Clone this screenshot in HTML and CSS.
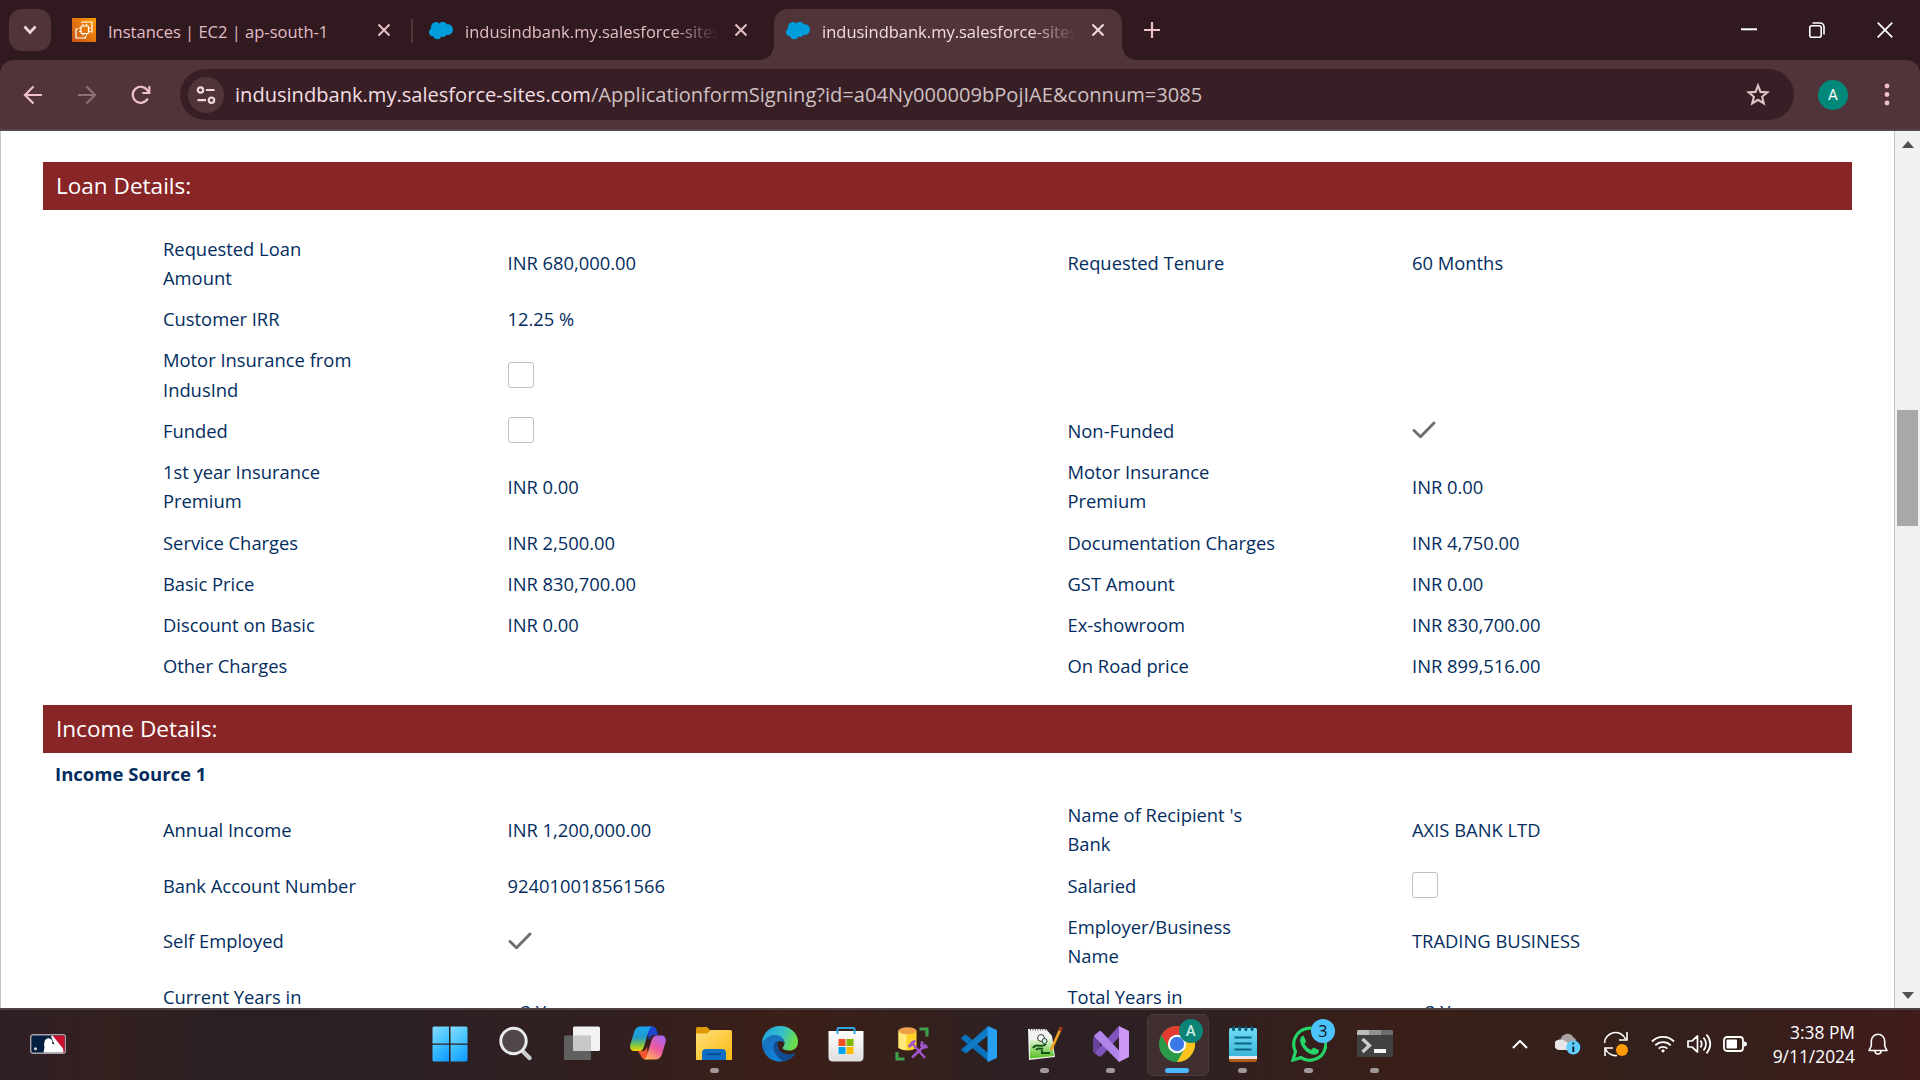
FILE: index.html
```html
<!DOCTYPE html>
<html lang="en">
<head>
<meta charset="utf-8">
<title>Application Form Signing</title>
<link rel="stylesheet" href="styles.css">
</head>
<body>
<svg class="defs" width="0" height="0" aria-hidden="true">
  <defs>
    <symbol id="cloud" viewBox="0 0 24 20"><path fill="#009ddc" d="M10 2.4A5 5 0 0 1 13.600 .8c1.900 0 3.500 1 4.300 2.600A5.200 5.200 0 0 1 24 8.600a5.300 5.300 0 0 1-6.400 5.200 4 4 0 0 1-5.100 1.700 4.600 4.600 0 0 1-8.500-.2A4.200 4.200 0 0 1 0 11.200c0-1.500.9-2.900 2.100-3.600A4.600 4.600 0 0 1 2 5.400 4.800 4.800 0 0 1 10 2.400z" transform="translate(0 1)"/></symbol>
    <symbol id="x" viewBox="0 0 14 14"><path d="M1.500 1.500l11 11m0-11l-11 11" stroke="currentColor" stroke-width="2.100" fill="none"/></symbol>
    <symbol id="check" viewBox="0 0 24 20"><path d="M2 10.500l6.500 6.300L22 3" stroke="#706e6b" stroke-width="2.900" fill="none" stroke-linecap="round" stroke-linejoin="round"/></symbol>
  </defs>
</svg>

<header class="tabstrip">
  <div class="tab-search"><svg width="14" height="10" viewBox="0 0 14 10"><path d="M1.500 1.500L7 7.500l5.500-6" fill="none" stroke="#ecd7dc" stroke-width="2.600"/></svg></div>
  <div class="tab tab-first">
    <svg class="fav" width="24" height="24" viewBox="0 0 24 24"><defs><linearGradient id="aws" x1="0" y1="1" x2="1" y2="0"><stop offset="0" stop-color="#c8511b"/><stop offset="1" stop-color="#f90"/></linearGradient></defs><path fill="url(#aws)" d="M0 0h24v24H0z"/><g fill="none" stroke="#fff" stroke-width="1.200"><rect x="9" y="8" width="7.500" height="7.500" rx="1"/><path d="M11 6v2m3.500-2v2M11 15.500v2m3.500-2v2M7 10h2m-2 3.500h2m7.500-3.500h2m-2 3.500h2M10 5V4h10v10h-1.500M6.500 11H4v9h9.500v-2"/></g></svg>
    <span class="tab-title t1">Instances | EC2 | ap-south-1</span>
    <svg class="tab-x" width="14" height="14"><use href="#x"/></svg>
  </div>
  <i class="tab-sep"></i>
  <div class="tab tab-second">
    <svg class="fav" width="24" height="20"><use href="#cloud"/></svg>
    <span class="tab-title fade">indusindbank.my.salesforce-sites.com</span>
    <svg class="tab-x" width="14" height="14"><use href="#x"/></svg>
  </div>
  <div class="tab tab-active">
    <svg class="fav" width="24" height="20"><use href="#cloud"/></svg>
    <span class="tab-title fade">indusindbank.my.salesforce-sites.com</span>
    <svg class="tab-x" width="14" height="14"><use href="#x"/></svg>
  </div>
  <svg class="plus" width="16" height="16" viewBox="0 0 16 16"><path d="M8 0v16M0 8h16" stroke="#edc0ca" stroke-width="2.200"/></svg>
  <div class="win">
    <svg width="16" height="16" viewBox="0 0 16 16"><path d="M0 7.300h16" stroke="#fff" stroke-width="2"/></svg>
    <svg width="16" height="16" viewBox="0 0 16 16" fill="none" stroke="#fff" stroke-width="1.600"><rect x=".8" y="3.800" width="11.400" height="11.400" rx="2"/><path d="M3.500 1H11a4 4 0 0 1 4 4v7.500"/></svg>
    <svg width="16" height="16" viewBox="0 0 16 16"><path d="M.7.7l14.600 14.600m0-14.600L.7 15.300" stroke="#fff" stroke-width="1.700"/></svg>
  </div>
</header>

<div class="toolbar-back">
<nav class="toolbar">
  <svg class="back" width="20" height="20" viewBox="0 0 20 20"><path d="M19 10H2m8.500-8.500L2 10l8.500 8.500" fill="none" stroke="#edc0ca" stroke-width="2.200"/></svg>
  <svg class="fwd" width="20" height="20" viewBox="0 0 20 20"><path d="M1 10h17M9.500 1.500L18 10l-8.500 8.500" fill="none" stroke="#8d6f75" stroke-width="2.200"/></svg>
  <svg class="reload" width="20" height="20" viewBox="0 0 20 20"><path d="M16.800 13.500A8 8 0 1 1 16.500 5.500L18 7.500M18.300 1v7h-7" fill="none" stroke="#edc0ca" stroke-width="2.200"/></svg>
  <div class="omnibox">
    <span class="site"><svg width="20" height="20" viewBox="0 0 20 20" fill="none" stroke="#ecd7dc" stroke-width="2.200"><circle cx="4.500" cy="5" r="2.700"/><path d="M10 5h8.500M1.500 15.200H10"/><circle cx="15.500" cy="15.200" r="2.700"/></svg></span>
    <span class="url"><b>indusindbank.my.salesforce-sites.com</b>/ApplicationformSigning?id=a04Ny000009bPojIAE&amp;connum=3085</span>
    <svg class="star" width="24" height="24" viewBox="0 0 24 24"><path d="M12 2.500l2.500 6.400 6.900.5-5.300 4.400 1.700 6.700L12 16.800l-5.800 3.700 1.700-6.700-5.300-4.400 6.900-.5z" fill="none" stroke="#dcc4c9" stroke-width="2.100"/></svg>
  </div>
  <span class="avatar">A</span>
  <svg class="dots" width="6" height="24" viewBox="0 0 6 24" fill="#edc0ca"><circle cx="3" cy="3" r="2.400"/><circle cx="3" cy="11.500" r="2.400"/><circle cx="3" cy="20" r="2.400"/></svg>
</nav>
</div>

<div class="viewport">
  <main class="page">
    <h2 class="bar">Loan Details:</h2>
    <div class="grid loan">
      <span>Requested Loan<br>Amount</span><span>INR 680,000.00</span><span>Requested Tenure</span><span>60 Months</span>
      <span>Customer IRR</span><span>12.25 %</span><span></span><span></span>
      <span>Motor Insurance from<br>IndusInd</span><span><i class="box"></i></span><span></span><span></span>
      <span>Funded</span><span><i class="box"></i></span><span>Non-Funded</span><span><svg class="check" width="24" height="20"><use href="#check"/></svg></span>
      <span>1st year Insurance<br>Premium</span><span>INR 0.00</span><span>Motor Insurance<br>Premium</span><span>INR 0.00</span>
      <span>Service Charges</span><span>INR 2,500.00</span><span>Documentation Charges</span><span>INR 4,750.00</span>
      <span>Basic Price</span><span>INR 830,700.00</span><span>GST Amount</span><span>INR 0.00</span>
      <span>Discount on Basic</span><span>INR 0.00</span><span>Ex-showroom</span><span>INR 830,700.00</span>
      <span>Other Charges</span><span></span><span>On Road price</span><span>INR 899,516.00</span>
    </div>
    <h2 class="bar">Income Details:</h2>
    <h3 class="source">Income Source 1</h3>
    <div class="grid">
      <span>Annual Income</span><span>INR 1,200,000.00</span><span>Name of Recipient 's<br>Bank</span><span>AXIS BANK LTD</span>
      <span>Bank Account Number</span><span>924010018561566</span><span>Salaried</span><span><i class="box"></i></span>
      <span>Self Employed</span><span><svg class="check" width="24" height="20"><use href="#check"/></svg></span><span>Employer/Business<br>Name</span><span>TRADING BUSINESS</span>
      <span>Current Years in<br>Business</span><span class="years">3 Years</span><span>Total Years in<br>Business</span><span class="years">3 Years</span>
    </div>
  </main>
  <div class="scroll">
    <svg width="12" height="7" viewBox="0 0 12 7"><path d="M0 7l6-7 6 7z" fill="#505050"/></svg>
    <i class="thumb"></i>
    <svg class="down" width="12" height="7" viewBox="0 0 12 7"><path d="M0 0h12L6 7z" fill="#505050"/></svg>
  </div>
</div>

<footer class="taskbar">
  <svg class="mlb" width="36" height="20" viewBox="0 0 36 20"><rect x=".7" y=".7" width="34.600" height="18.600" rx="2.500" fill="#041e42" stroke="#aaa4a8" stroke-width="1.400"/><path d="M22 1.400h11.500q1.100 0 1.100 1.100v15q0 1.100-1 1.100H31z" fill="#c8102e"/><path d="M13.500 18.600l1-5 -.5-3 1-4.500 3-2 3 1 1.500 2-.5 2.500 2.500 1L21 2.500l1.500-1L33 14.500l.5 4.100z" fill="#fff"/><circle cx="5.500" cy="14.800" r="1.500" fill="#ddd"/></svg>
  <div class="apps">
    <span class="app"><svg viewBox="0 0 36 36"><defs><linearGradient id="w" x1="0" y1="0" x2="1" y2="1"><stop offset="0" stop-color="#83dcff"/><stop offset="1" stop-color="#34bcff"/></linearGradient><linearGradient id="w2" x1="0" y1="0" x2="1" y2="1"><stop offset="0" stop-color="#4cc9ff"/><stop offset="1" stop-color="#0c97ff"/></linearGradient></defs><path fill="url(#w)" d="M2 .5h15v17H.5V2Q.5.500 2 .500z"/><path fill="url(#w)" d="M18.500.5H34q1.500 0 1.500 1.500v15.500h-17z"/><path fill="url(#w2)" d="M.5 18.800H17v16.700H2q-1.500 0-1.500-1.500z"/><path fill="url(#w2)" d="M18.500 18.800h17V34q0 1.500-1.500 1.500H18.500z"/></svg></span>
    <span class="app"><svg viewBox="0 0 36 36"><path d="M24 24.500l7.500 7.500" stroke="#c9cdd2" stroke-width="4.500" stroke-linecap="round"/><circle cx="15.500" cy="15" r="12.700" fill="#51474a" stroke="#e9eaec" stroke-width="3"/></svg></span>
    <span class="app"><svg viewBox="0 0 36 36"><rect x="0" y="9.500" width="27" height="24.500" rx="1.500" fill="#606060"/><rect x="9" y=".5" width="27" height="24.500" rx="1.500" fill="#f2f2f2"/><path d="M9 9.500h18V25H10.500Q9 25 9 23.500z" fill="#c8c8c8"/></svg></span>
    <span class="app"><svg viewBox="0 0 36 36"><defs><linearGradient id="c1" x1="0" y1="0" x2="0" y2="1"><stop offset="0" stop-color="#18a5ee"/><stop offset=".45" stop-color="#2399c8"/><stop offset=".75" stop-color="#7cc448"/><stop offset="1" stop-color="#f5d600"/></linearGradient><linearGradient id="c2" x1=".8" y1="0" x2=".2" y2="1"><stop offset="0" stop-color="#a965ef"/><stop offset=".5" stop-color="#ee5ba0"/><stop offset="1" stop-color="#ffb657"/></linearGradient></defs><path fill="#1b48cf" d="M17 .5h5.500c2.500 0 3.500 1.500 4.200 4L28 9h-4c-3 0-4 2-5 5z"/><path fill="url(#c1)" d="M10.500.5H22c-2 .7-3 3-3.800 6l-4 13.500c-1 3-2 5-5 5H4c-3.500 0-4.500-3-3.500-7L4 6.500C5 3 7 .5 10.500.5z"/><path fill="#f2542d" d="M8 25h4c3 0 4-1.500 5-5l1 10-2 3H15c-2.500 0-3.500-1.500-4.200-3.500z"/><path fill="url(#c2)" d="M27 9.500h4.500c3.500 0 5 3 4 7l-3.500 11.500c-1 3.500-3 5.500-6.500 5.500H13.500c2.500-.8 3.300-3 4-6l4-13c1-3 2.500-5 5.500-5z"/></svg></span>
    <span class="app run"><svg viewBox="0 0 36 36"><defs><linearGradient id="fo" x1="0" y1="0" x2="1" y2="1"><stop offset="0" stop-color="#ffe07a"/><stop offset="1" stop-color="#fbb90f"/></linearGradient></defs><path fill="#dc9b05" d="M0 2.500Q0 1 1.500 1H11l4 4v6H0z"/><path fill="url(#fo)" d="M0 7.500h11l4-3.500h19.500Q36 4 36 5.500V34H0z"/><path fill="#0c6fc4" d="M6 34V27q0-4 4-4h16q4 0 4 4v7z"/><path d="M11 28.200h14" stroke="#063f7d" stroke-width="1.400"/></svg></span>
    <span class="app"><svg viewBox="0 0 36 36"><defs><linearGradient id="e1" x1="0" y1="0" x2="1" y2=".3"><stop offset="0" stop-color="#1a9fe0"/><stop offset=".6" stop-color="#35c1c8"/><stop offset="1" stop-color="#69dc4c"/></linearGradient><linearGradient id="e2" x1="0" y1="0" x2=".7" y2="1"><stop offset="0" stop-color="#1d6cb5"/><stop offset="1" stop-color="#0b86dd"/></linearGradient></defs><path fill="url(#e2)" d="M0 17C0 10 8 6 14 7.500c5 1 8 5 8 9-7-5-11 4-6 9 5 6 13 4 17 2A18 18 0 0 1 0 17z"/><path fill="#104d92" d="M15 14.500c-4 3-5 8-1 14 2 3.500 5.500 6.500 9 6.500 5-1.500 9-4.500 10.300-8C25 31 16 26 16 20z"/><path fill="url(#e1)" d="M0 17C.5 7 8 0 18 0c11 0 18 8 18 15.500C36 22 32 24.500 27.500 24.500c-4.500 0-7-1.500-7-2.500s2-1.500 2-5C22.500 9 9 4 0 17z"/></svg></span>
    <span class="app"><svg viewBox="0 0 36 36"><defs><linearGradient id="st" x1="0" y1="0" x2="0" y2="1"><stop offset="0" stop-color="#fff"/><stop offset="1" stop-color="#dedede"/></linearGradient></defs><path fill="url(#st)" d="M.5 5h35v26q0 4.500-4.500 4.500H5q-4.500 0-4.500-4.500z"/><path d="M9.500 8V3q0-1 1-1h15q1 0 1 1v5" fill="none" stroke="#29a9e0" stroke-width="2"/><path fill="#f25022" d="M10.500 13h7v7h-7z"/><path fill="#7fba00" d="M18.500 13h7v7h-7z"/><path fill="#00a4ef" d="M10.500 21h7v7h-7z"/><path fill="#ffb900" d="M18.500 21h7v7h-7z"/></svg></span>
    <span class="app"><svg viewBox="0 0 36 36"><path fill="#ffd329" d="M4.500 4.500h18V22q-9 5-18 0z"/><path fill="#ffe778" d="M4.500 4.500h8V24q-5 0-8-2z"/><ellipse cx="13.500" cy="4.700" rx="9" ry="3.500" fill="#f0a04b"/><path d="M25.500 3h7.500v7.500M3 26v7h7.500" stroke="#3f9e49" stroke-width="3.200" fill="none"/><path d="M17 16l14 16M18 31.500l14-13" stroke="#a055c8" stroke-width="2.500"/><path d="M13.500 20l6-6 3 1-6.500 7zM27 15l-1 5 3 3 5-1-1-3-2 1-2-2 1-2z" fill="#a055c8"/></svg></span>
    <span class="app"><svg viewBox="0 0 36 36"><path fill="#0873bd" d="M0 12l3.500-3q1-.7 2 0L27 27v8L1 13.500Q0 12.700 0 12z"/><path fill="#0a6ab3" d="M0 24l3.500 3q1 .7 2 0L27 9V1L1 22.500Q0 23.300 0 24z"/><path fill="#1590dc" d="M26.500 0L3 22.500 5.500 27 26.500 10z" opacity=".45"/><path fill="#27a0f2" d="M26.500 0L36 4v28l-9.500 4z"/></svg></span>
    <span class="app run"><svg viewBox="0 0 36 36"><defs><linearGradient id="np" x1="0" y1="0" x2="0" y2="1"><stop offset="0" stop-color="#eefbe4"/><stop offset="1" stop-color="#53bd21"/></linearGradient></defs><path fill="#f3f3f3" d="M1 3h18l6 7 3 21-26 3z"/><path d="M3 3.500h16" stroke="#555" stroke-width="2" stroke-dasharray="1 1.500"/><path fill="url(#np)" d="M3 14l21-2 3 18-24 2.500z"/><path d="M6 22c3-6 9 1 13-4M9 24c2-3 5 0 7-2M15 24v3h8" stroke="#16561a" stroke-width="2" fill="none"/><circle cx="14" cy="12" r="3.400" fill="#fff" stroke="#333"/><circle cx="17.500" cy="15" r="2.500" fill="#cfe" stroke="#333"/><path d="M34 2L24 24" stroke="#f0a020" stroke-width="2.800"/><path d="M34.500 1L33 5" stroke="#a33025" stroke-width="2.800"/></svg></span>
    <span class="app run"><svg viewBox="0 0 36 36"><path fill="#67429b" d="M1 11l6 5v5l-6 6q-1-1-1-2V13q0-1 1-2zM26 0v11L9 30 1.500 27z"/><path fill="#7f55bd" d="M1.500 27L26 0v11L6.500 31z"/><path fill="#b184ea" d="M1 9.500L6.500 5q1-.5 2 .5L26 24.500V36L1.500 11z"/><path fill="#ca97f7" d="M26 0l10 5v26l-10 5z"/></svg></span>
    <span class="app run active"><svg viewBox="0 0 36 36"><circle cx="18" cy="18" r="18" fill="#2b9a48"/><path fill="#e53a30" d="M2.400 9A18 18 0 0 1 33.600 9H18a9 9 0 0 0-7.800 13.500z"/><path fill="#fcc31d" d="M33.600 9A18 18 0 0 1 18 36l7.800-13.500A9 9 0 0 0 25.800 13.500L18 9z"/><circle cx="18" cy="18" r="9.200" fill="#fff"/><circle cx="18" cy="18" r="7.200" fill="#3b78e8"/></svg><b class="badge a">A</b></span>
    <span class="app run"><svg viewBox="0 0 36 36"><defs><linearGradient id="nt" x1="0" y1="0" x2="0" y2="1"><stop offset="0" stop-color="#71dcf5"/><stop offset="1" stop-color="#3db7da"/></linearGradient></defs><path fill="#b75b13" d="M4 30h28v4q0 2-2 2H6q-2 0-2-2z"/><path fill="#e9e9ee" d="M4 29h28v4H4z"/><path fill="url(#nt)" d="M4 3.500q0-1.500 1.500-1.500h25q1.500 0 1.500 1.500V30H4z"/><path d="M9.500 11.500h17m-17 6h17m-17 6h17" stroke="#0a6585" stroke-width="1.800"/><path d="M8.500 1.500v2m6.200-2v2m6.200-2v2m6.200-2v2" stroke="#075b78" stroke-width="3" stroke-linecap="round"/></svg></span>
    <span class="app run"><svg viewBox="0 0 36 36"><path d="M2 34l2.500-8.500A16 16 0 1 1 10 31.600z" fill="none" stroke="#25d366" stroke-width="3.200"/><path fill="#25d366" d="M12.500 9.500l2.700 6-1.700 2.600q2.500 4.300 6.500 5.800l2.500-2.500 5.500 2.700q0 4.500-5 4.700C16 28.500 9.500 20.500 9 14.500q.2-4 3.500-5z"/></svg><b class="badge n">3</b></span>
    <span class="app run"><svg viewBox="0 0 36 36"><rect y="4" width="36" height="27" rx="1.500" fill="#414141"/><path fill="#bcbcbc" d="M0 9V5.500Q0 4 1.500 4H12v5z"/><path fill="#929292" d="M12 4h12v5H12z"/><path fill="#6e6e6e" d="M24 4h10.500Q36 4 36 5.500V9H24z"/><path d="M5.500 13l7 6.500-7 6.500" fill="none" stroke="#ccc" stroke-width="3.300"/><path fill="#f4f4f4" d="M17 23h12v4H17z"/></svg></span>
  </div>
  <div class="tray">
    <svg class="i-up" width="16" height="10" viewBox="0 0 16 10"><path d="M1 9l7-7 7 7" fill="none" stroke="#fff" stroke-width="2"/></svg>
    <svg class="i-cloud" width="26" height="22" viewBox="0 0 26 22"><path fill="#aaa0a1" d="M5.500 6.500a7 7 0 0 1 13-2 5 5 0 0 1 2.500 6L12 16z"/><path fill="#e8e5e6" d="M4.500 6.500q4-.5 7 2.500l6 3-5 5H4.500a5.200 5.200 0 0 1 0-10.500z"/><circle cx="18.300" cy="14.500" r="7" fill="#60cdff"/><path d="M18.300 9.500v2m0 2v5.500" stroke="#123" stroke-width="2"/></svg>
    <svg class="i-sync" width="26" height="26" viewBox="0 0 26 26"><g fill="none" stroke="#fff" stroke-width="1.600"><path d="M1.500 12A11 11 0 0 1 22.500 8M24 1v8h-8M2 25v-8h8M2.500 18A11 11 0 0 0 14 24.500"/></g><circle cx="19" cy="19" r="6" fill="#ff9a07"/></svg>
    <svg class="i-wifi" width="24" height="18" viewBox="0 0 24 18" fill="none" stroke="#fff" stroke-width="1.900"><path d="M1 6.500a15.500 15.500 0 0 1 22 0M4.300 10.300a11 11 0 0 1 15.400 0M7.700 13.600a6.200 6.200 0 0 1 8.600 0"/><circle cx="12" cy="15.800" r="1.600" fill="#fff" stroke="none"/></svg>
    <svg class="i-vol" width="25" height="22" viewBox="0 0 25 22" fill="none" stroke="#fff" stroke-width="1.700"><path d="M1 8h4l5.500-5v16L5 14H1z" stroke-linejoin="round"/><path d="M13.500 7.500q2.500 3.500 0 7M16.500 4.500q5 6.500 0 13M19.500 1.500q7.500 9.500 0 19"/></svg>
    <svg class="i-bat" width="24" height="16" viewBox="0 0 24 16"><rect x="1" y="1" width="19" height="14" rx="3" fill="none" stroke="#fff" stroke-width="1.800"/><rect x="3.500" y="3.500" width="10.500" height="9" rx="1" fill="#fff"/><path d="M21 5.500q3 0 3 2.500t-3 2.500z" fill="#fff"/></svg>
    <div class="clock"><span>3:38 PM</span><span>9/11/2024</span></div>
    <svg class="i-bell" width="20" height="22" viewBox="0 0 20 22"><path d="M1 17.500l2.300-4.500V8a6.700 6.700 0 0 1 13.400 0v5l2.300 4.500zM7 18a3 3 0 0 0 6 0" fill="none" stroke="#fff" stroke-width="1.600" stroke-linejoin="round"/></svg>
  </div>
</footer>
</body>
</html>
```
FILE: styles.css
```css
* { box-sizing: border-box; }
html, body { margin: 0; }
body {
  width: 1920px; height: 1080px; overflow: hidden;
  display: flex; flex-direction: column;
  font-family: "Open Sans", "Noto Sans", sans-serif;
  background: #30191f;
}
svg { display: block; flex: none; }
.defs { position: absolute; }

.tabstrip { height: 60px; flex: none; display: flex; align-items: flex-start; background: #30191f; color: #e3bdc6; }
.tab-search { width: 42px; height: 42px; margin: 9px 0 0 9px; border-radius: 13px; background: #50343a; display: flex; align-items: center; justify-content: center; flex: none; }
.tab { height: 51px; margin-top: 9px; padding-bottom: 9px; display: flex; align-items: center; flex: none; }
.tab-title { margin-left: 12px; font-size: 16.500px; line-height: 24px; white-space: nowrap; overflow: hidden; width: 252px; flex: none; padding-top: 4px; }
.tab-first { width: 360px; padding-left: 21px; }
.tab-x { margin-left: 17px; }
.fade { -webkit-mask-image: linear-gradient(90deg, #000 82%, transparent 101%); mask-image: linear-gradient(90deg, #000 82%, transparent 101%); }
.tab-sep { width: 2px; height: 24px; margin-top: 19px; background: #50343a; flex: none; }
.tab-second { width: 361px; padding-left: 16px; }
.tab-second .tab-x { margin-left: 17px; }
.tab-active .tab-x { margin-left: 17px; }
.tab-active { position: relative; width: 348px; padding-left: 12px; background: #50343a; border-radius: 14px 14px 0 0; color: #f0dce0; }
.tab-active::before, .tab-active::after { content: ""; position: absolute; bottom: 0; width: 14px; height: 14px; }
.tab-active::before { left: -14px; background: radial-gradient(circle at 0 0, transparent 13.500px, #50343a 14px); }
.tab-active::after { right: -14px; background: radial-gradient(circle at 100% 0, transparent 13.500px, #50343a 14px); }
.plus { margin: 22px 0 0 22px; }
.win { margin: 22px 27px 0 auto; display: flex; gap: 52px; }

.toolbar-back { height: 71px; flex: none; background: #30191f; }
.toolbar { height: 71px; display: flex; align-items: center; padding: 0 30px 0 23px; background: #50343a; border-bottom: 2px solid #554648; border-radius: 14px 14px 0 0; }
.fwd { margin-left: 34px; }
.reload { margin-left: 34px; }
.omnibox { width: 1614px; height: 51px; margin-left: 29px; border-radius: 26px; background: #381f25; display: flex; align-items: center; padding: 0 24px 0 8px; }
.site { width: 36px; height: 36px; border-radius: 50%; background: #50343a; display: flex; align-items: center; justify-content: center; }
.url { margin-left: 11px; font-size: 20.080px; color: #cfc0c3; white-space: nowrap; }
.url b { font-weight: 400; color: #f3dfe3; }
.star { margin-left: auto; }
.avatar { width: 30px; height: 30px; margin-left: 24px; border-radius: 50%; background: #00897b; color: #fff; font: 15px/30px Roboto, sans-serif; text-align: center; }
.dots { margin-left: auto; }

.viewport { height: 877px; flex: none; display: flex; background: #fff; border-left: 1px solid #c4c4c4; overflow: hidden; }
.page { width: 1851px; padding: 31px 0 0 42px; color: #032d60; font-size: 18.360px; line-height: 29.250px; flex: none; }
.bar { margin: 0; height: 48px; padding-left: 13px; background: #882627; color: #fff; font-size: 22.550px; font-weight: 400; line-height: 48px; }
.grid { display: grid; grid-template-columns: 344.500px 560px 344.500px 400px; padding-left: 120px; }
.grid > span { padding: 6px 0; min-height: 41.250px; display: flex; align-items: center; white-space: nowrap; }
.loan { padding-top: 17.500px; padding-bottom: 18.500px; }
.source { margin: 0; padding-left: 12px; height: 41px; font-size: 18.550px; font-weight: 700; line-height: 42px; }
.box { width: 26px; height: 26px; border: 1px solid #c0c0c0; border-radius: 3px; background: #fff; }
.grid > .years { padding-left: 13px; }
.scroll { width: 26px; margin-left: auto; border-left: 1px solid #c4c4c4; background: #f1f1f1; display: flex; flex-direction: column; align-items: center; padding: 10px 0 9px; }
.thumb { width: 21px; height: 116px; margin-top: 262px; background: #a8a8a8; }
.down { margin-top: auto; }

.taskbar {
  height: 72px; flex: none; display: flex; align-items: center; border-top: 2px solid #4e4142; color: #fff;
  background: linear-gradient(90deg, #2f1f25 0, #33201f 110px, #2a2023 220px, #2a2025 370px, #321f1f 620px, #3b1f18 780px, #37201b 900px, #2c2024 1010px, #2e2022 1180px, #3a1f18 1400px, #37201a 1500px, #33201c 1680px, #401c1a 1920px);
}
.mlb { margin: 0 0 2px 30px; }
.apps { display: flex; margin-left: 351px; }
.app { position: relative; flex: none; width: 66.070px; height: 70px; display: flex; justify-content: center; padding-top: 16px; }
.app svg { position: relative; width: 36px; height: 36px; }
.run::after { content: ""; position: absolute; bottom: 7px; left: 28.500px; width: 9px; height: 5px; border-radius: 3px; background: #a29899; }
.active::before { content: ""; position: absolute; left: 3px; top: 4px; width: 60px; height: 60px; border: 1px solid #4c3a3c; border-radius: 6px; background: #402e31; }
.active::after { left: 21px; width: 24px; background: #4cb8ff; }
.badge { position: absolute; width: 24px; height: 24px; border-radius: 50%; text-align: center; font-weight: 400; }
.badge.a { left: 35px; top: 9px; background: #0b8375; color: #c9eee5; font: 500 15px/24px Roboto, sans-serif; }
.badge.n { left: 35px; top: 9px; background: #4cc2ff; color: #111; font-size: 16px; line-height: 24px; }
.tray { margin-left: auto; display: flex; align-items: center; padding: 0 32px 2px 0; }
.i-cloud { margin-left: 27px; }
.i-sync { margin-left: 22px; }
.i-wifi { margin-left: 22px; }
.i-vol { margin-left: 12px; }
.i-bat { margin-left: 11px; }
.clock { width: 91px; margin-left: 17px; display: flex; flex-direction: column; align-items: flex-end; font-size: 17.400px; line-height: 24px; white-space: nowrap; }
.i-bell { margin-left: 13px; }
```
